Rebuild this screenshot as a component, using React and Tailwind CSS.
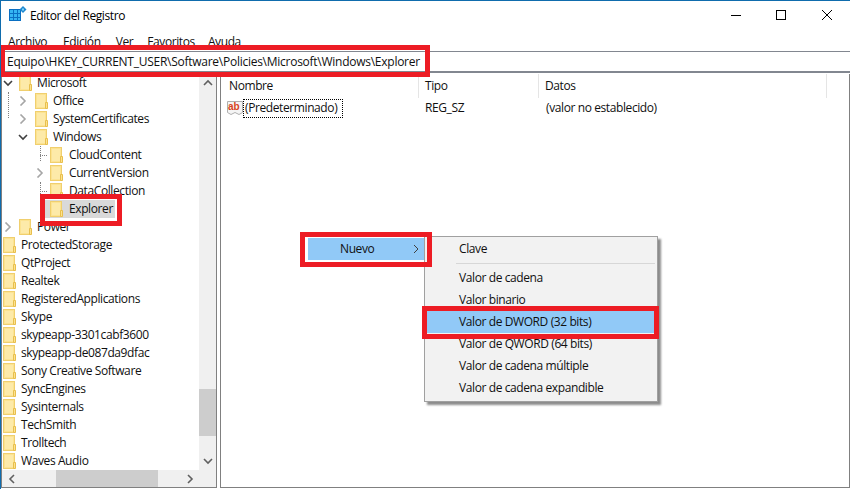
import React from "react";

const FONT = "[font-family:'Open_Sans','Noto_Sans',sans-serif]";

function Folder() {
  return (
    <svg width="13" height="18" viewBox="0 0 13 18" className="shrink-0">
      <rect x="0.5" y="1.5" width="11" height="15" fill="#fce391" stroke="#f0cf6e" />
      <rect x="2" y="3" width="8" height="12" fill="#fdeaa9" />
      <path d="M10.5 10.5H12.5V16.5H10.5Z" fill="#fde28f" stroke="#e8bf4d" />
    </svg>
  );
}

function Chevron({ open }) {
  return (
    <svg width="10" height="10" viewBox="0 0 10 10" className="shrink-0">
      {open ? (
        <path d="M1 3L5 7L9 3" fill="none" stroke="#404040" strokeWidth="1.6" />
      ) : (
        <path d="M2.5 0.5L7 5L2.5 9.5" fill="none" stroke="#a6a6a6" strokeWidth="1.6" />
      )}
    </svg>
  );
}

function TreeRow({ label, level = 0, chevron, selected, dots }) {
  const pad = ["pl-[1px]", "pl-[17px]", "pl-[33px]", "pl-[48px]"][level];
  const gap = level === 3 ? "ml-[5px]" : "ml-[4px]";
  return (
    <div className={`relative flex h-[18px] items-center ${pad}`}>
      {dots ? <div className="absolute left-[38px] top-[9px] h-0 w-[7px] border-t border-dotted border-[#808080]" /> : null}
      {chevron ? (
        <div className="absolute top-[4px]" style={{ left: level === 1 ? 1 : level === 2 ? 16 : 33 }}>
          <Chevron open={chevron === "open"} />
        </div>
      ) : null}
      {selected ? <div className="absolute left-[43px] top-0 h-[18px] w-[70px] bg-[#d9d9d9]" /> : null}
      <div className="relative flex items-center">
        <Folder />
        <span className={`${gap} flex h-[18px] items-center px-[1px] whitespace-nowrap`}>{label}</span>
      </div>
    </div>
  );
}

function MenuItem({ label, active }) {
  return (
    <div className={`flex h-[22px] items-center pb-px pl-[34px] ${active ? "bg-[#91c9f7]" : ""}`}>{label}</div>
  );
}

const rows = [
  { label: "Microsoft", level: 1, chevron: "open" },
  { label: "Office", level: 2, chevron: "closed" },
  { label: "SystemCertificates", level: 2, chevron: "closed" },
  { label: "Windows", level: 2, chevron: "open" },
  { label: "CloudContent", level: 3, dots: true },
  { label: "CurrentVersion", level: 3, chevron: "closed" },
  { label: "DataCollection", level: 3, dots: true },
  { label: "Explorer", level: 3, selected: true, dots: true },
  { label: "Power", level: 1, chevron: "closed" },
  { label: "ProtectedStorage" },
  { label: "QtProject" },
  { label: "Realtek" },
  { label: "RegisteredApplications" },
  { label: "Skype" },
  { label: "skypeapp-3301cabf3600" },
  { label: "skypeapp-de087da9dfac" },
  { label: "Sony Creative Software" },
  { label: "SyncEngines" },
  { label: "Sysinternals" },
  { label: "TechSmith" },
  { label: "Trolltech" },
  { label: "Waves Audio" },
];

export default function App() {
  return (
    <div className={`relative h-[489px] w-[850px] overflow-hidden border-t border-l border-[#0f6cad] bg-white text-[12px] leading-none tracking-[-0.4px] text-[#101010] ${FONT}`}>
      {/* title bar */}
      <div className="flex h-[30px] items-center">
        <svg width="18" height="18" viewBox="0 0 18 18" className="-mt-[2px] ml-[8px] shrink-0">
          <path d="M0 3H12V15H0Z" fill="#0a6fc2" />
          <g fill="#35b5f2">
            <rect x="1" y="4" width="3" height="3" /><rect x="5" y="4" width="3" height="3" /><rect x="9" y="4" width="2" height="3" />
            <rect x="1" y="8" width="3" height="3" /><rect x="5" y="8" width="3" height="3" /><rect x="9" y="8" width="2" height="3" />
            <rect x="1" y="12" width="3" height="2" /><rect x="5" y="12" width="3" height="2" /><rect x="9" y="12" width="2" height="2" />
          </g>
          <path d="M14 0L17.5 3.5L14 7L10.5 3.5Z" fill="#1e88d0" />
          <rect x="13" y="2.5" width="2" height="2" fill="#7fd4f8" />
        </svg>
        <span className="ml-[3px] text-[#000]">Editor del Registro</span>
        <div className="-mt-[2px] ml-auto flex items-center pr-[18px]">
          <div className="h-px w-[10px] bg-black" />
          <div className="ml-[35px] h-[10px] w-[10px] border border-black" />
          <svg width="10" height="10" viewBox="0 0 10 10" className="ml-[36px]">
            <path d="M0 0L10 10M10 0L0 10" stroke="#000" strokeWidth="1" />
          </svg>
        </div>
      </div>

      {/* menu */}
      <div className="flex h-[20px] items-center pl-[7px] pt-[1px]">
        <span>Archivo</span>
        <span className="ml-[16px]">Edición</span>
        <span className="ml-[15px]">Ver</span>
        <span className="ml-[14px]">Favoritos</span>
        <span className="ml-[13px]">Ayuda</span>
      </div>

      {/* address bar */}
      <div className="flex h-[22px] items-center border-t border-b-2 border-[#828790] bg-white pl-[6px]">
        <span className="tracking-[-0.26px]">Equipo\HKEY_CURRENT_USER\Software\Policies\Microsoft\Windows\Explorer</span>
      </div>

      {/* panes */}
      <div className="flex h-[416px] pt-px">
        {/* tree */}
        <div className="flex h-[414px] w-[216px] shrink-0 flex-col border-x border-b border-x-[#808080] border-b-[#808080]">
          <div className="flex min-h-0 flex-1">
            <div className="relative w-[197px] shrink-0 overflow-hidden">
              <div className="absolute left-[6px] top-[18px] h-[26px] border-l border-dotted border-[#808080]" />
              <div className="absolute left-[38px] top-[69px] h-[18px] border-l border-dotted border-[#808080]" />
              <div className="absolute left-[38px] top-[108px] h-[14px] border-l border-dotted border-[#808080]" />
              {rows.map((r) => (
                <TreeRow key={r.label} {...r} />
              ))}
            </div>
            <div className="flex w-[17px] shrink-0 flex-col bg-[#f0f0f0]">
              <div className="flex h-[18px] items-center justify-center">
                <svg width="10" height="8" viewBox="0 0 10 8"><path d="M1 6L5 2L9 6" fill="none" stroke="#606060" strokeWidth="1.6" /></svg>
              </div>
              <div className="mt-[297px] h-[47px] bg-[#cdcdcd]" />
              <div className="mt-auto flex h-[18px] items-center justify-center">
                <svg width="10" height="8" viewBox="0 0 10 8"><path d="M1 2L5 6L9 2" fill="none" stroke="#606060" strokeWidth="1.6" /></svg>
              </div>
            </div>
          </div>
          <div className="flex h-[17px] shrink-0 items-center bg-[#f0f0f0]">
            <div className="flex w-[19px] justify-center">
              <svg width="8" height="10" viewBox="0 0 8 10"><path d="M6 1L2 5L6 9" fill="none" stroke="#606060" strokeWidth="1.6" /></svg>
            </div>
            <div className="ml-[35px] h-[17px] w-[102px] bg-[#cdcdcd]" />
            <div className="ml-auto mr-[22px] flex">
              <svg width="8" height="10" viewBox="0 0 8 10"><path d="M2 1L6 5L2 9" fill="none" stroke="#606060" strokeWidth="1.6" /></svg>
            </div>
          </div>
        </div>

        {/* list */}
        <div className="ml-[3px] h-[414px] min-w-0 flex-1 border-x border-b border-[#808080]">
          <div className="flex h-[24px] items-center">
            <div className="flex h-[24px] w-[198px] items-center border-r border-[#e5e5e5] pl-[8px]">Nombre</div>
            <div className="flex h-[24px] w-[120px] items-center border-r border-[#e5e5e5] pl-[6px]">Tipo</div>
            <div className="flex h-[24px] w-[288px] items-center border-r border-[#e5e5e5] pl-[6px]">Datos</div>
          </div>
          <div className="flex h-[20px] items-center pl-[6px]">
            <svg width="16" height="16" viewBox="0 0 16 16" className="shrink-0">
              <path d="M0.5 1.5H15.5V12.5L12 14.5L8 12.5L4 14.5L0.5 12.5Z" fill="#f5f5f5" stroke="#b0b0b0" />
              <text x="1" y="10" fontSize="10" fontWeight="700" letterSpacing="0" fill="#d8431c" fontFamily="'Liberation Sans',sans-serif">ab</text>
            </svg>
            <div className="flex h-[19px] w-[100px] items-center whitespace-nowrap border border-dotted border-black pl-px">(Predeterminado)</div>
            <div className="w-[203px] pl-[82px]">REG_SZ</div>
            <div className="whitespace-nowrap">(valor no establecido)</div>
          </div>
        </div>
      </div>

      {/* context menus */}
      <div className="absolute left-[307px] top-[237px] flex h-[22px] w-[116px] items-center justify-between bg-[#91c9f7] pb-px pl-[32px] pr-[5px]">
        <span>Nuevo</span>
        <svg width="6" height="10" viewBox="0 0 6 10"><path d="M1 1L5 5L1 9" fill="none" stroke="#404040" strokeWidth="1" /></svg>
      </div>
      <div className="absolute left-[423px] top-[235px] w-[234px] border border-[#a0a0a0] bg-[#f2f2f2] pb-[2px] pt-[1px] shadow-[3px_3px_2px_rgba(0,0,0,0.45)]">
        <MenuItem label="Clave" />
        <div className="my-[3px] ml-[31px] mr-[2px] h-px bg-[#d7d7d7]" />
        <MenuItem label="Valor de cadena" />
        <MenuItem label="Valor binario" />
        <MenuItem label="Valor de DWORD (32 bits)" active />
        <MenuItem label="Valor de QWORD (64 bits)" />
        <MenuItem label="Valor de cadena múltiple" />
        <MenuItem label="Valor de cadena expandible" />
      </div>

      {/* red annotation frames */}
      <div className="pointer-events-none absolute -left-px top-[44px] h-[32px] w-[430px] border-[5px] border-[#ed1c24]" />
      <div className="pointer-events-none absolute left-[39px] top-[193px] h-[32px] w-[82px] border-[5px] border-[#ed1c24]" />
      <div className="pointer-events-none absolute left-[299px] top-[231px] h-[35px] w-[132px] border-[5px] border-[#ed1c24]" />
      <div className="pointer-events-none absolute left-[421px] top-[305px] h-[33px] w-[237px] border-[5px] border-[#ed1c24]" />
    </div>
  );
}
